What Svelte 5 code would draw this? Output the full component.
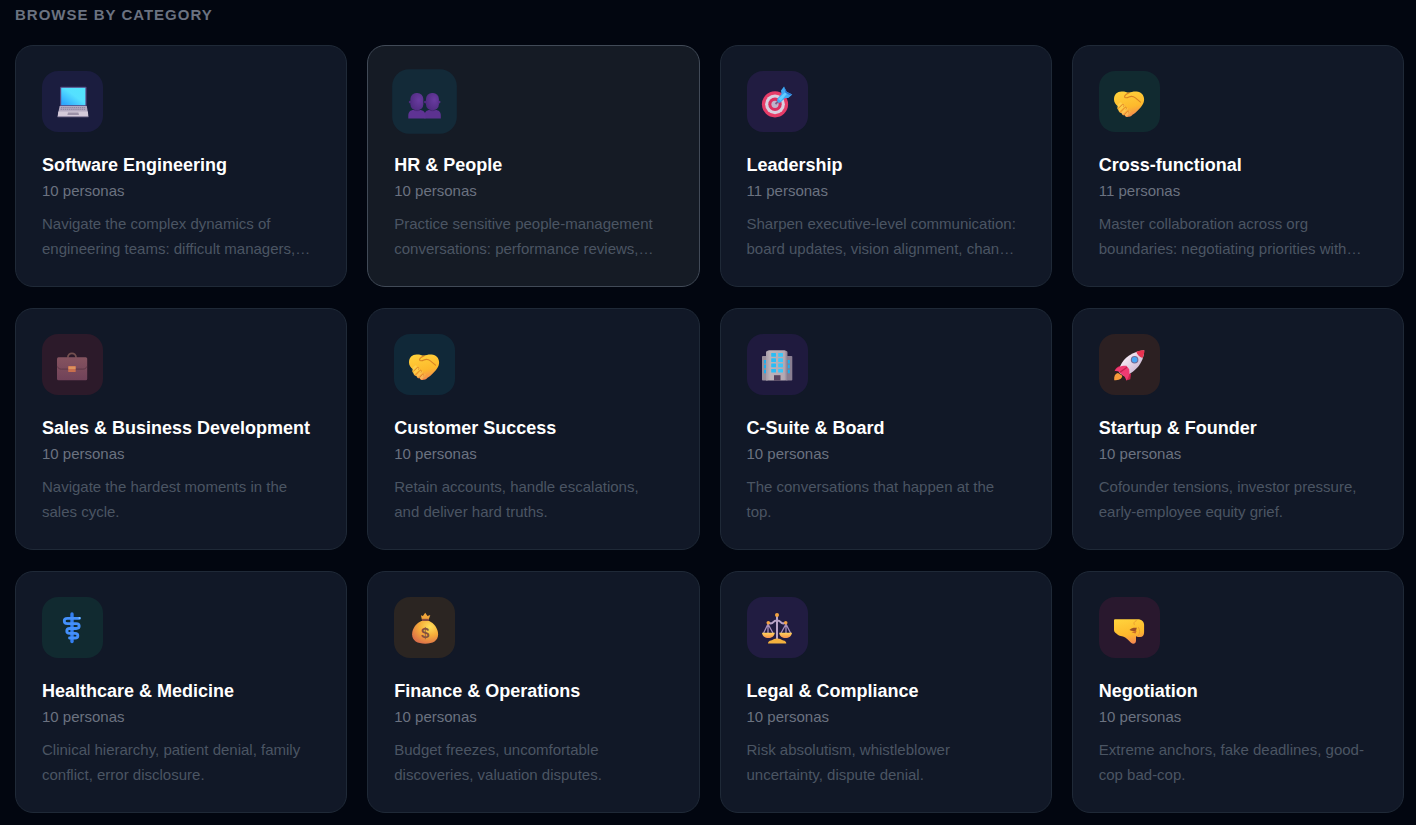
<script lang="ts">
    type Category = {
        icon: string
        tone: string
        title: string
        count: number
        text: string
    }

    const categories: Category[] = [
        { icon: 'laptop', tone: 'indigo', title: 'Software Engineering', count: 10, text: 'Navigate the complex dynamics of engineering teams: difficult managers,…' },
        { icon: 'people', tone: 'cyan', title: 'HR & People', count: 10, text: 'Practice sensitive people-management conversations: performance reviews,…' },
        { icon: 'target', tone: 'violet', title: 'Leadership', count: 11, text: 'Sharpen executive-level communication: board updates, vision alignment, chan…' },
        { icon: 'handshake', tone: 'green', title: 'Cross-functional', count: 11, text: 'Master collaboration across org boundaries: negotiating priorities with…' },
        { icon: 'briefcase', tone: 'red', title: 'Sales & Business Development', count: 10, text: 'Navigate the hardest moments in the sales cycle.' },
        { icon: 'handshake', tone: 'sky', title: 'Customer Success', count: 10, text: 'Retain accounts, handle escalations, and deliver hard truths.' },
        { icon: 'building', tone: 'purple', title: 'C-Suite & Board', count: 10, text: 'The conversations that happen at the top.' },
        { icon: 'rocket', tone: 'orange', title: 'Startup & Founder', count: 10, text: 'Cofounder tensions, investor pressure, early-employee equity grief.' },
        { icon: 'medical', tone: 'green', title: 'Healthcare & Medicine', count: 10, text: 'Clinical hierarchy, patient denial, family conflict, error disclosure.' },
        { icon: 'money', tone: 'amber', title: 'Finance & Operations', count: 10, text: 'Budget freezes, uncomfortable discoveries, valuation disputes.' },
        { icon: 'scales', tone: 'violet', title: 'Legal & Compliance', count: 10, text: 'Risk absolutism, whistleblower uncertainty, dispute denial.' },
        { icon: 'fist', tone: 'rose', title: 'Negotiation', count: 10, text: 'Extreme anchors, fake deadlines, good-cop bad-cop.' },
    ]

    let active = $state(1)
</script>

<svg class="defs" aria-hidden="true">
    <defs>
        <linearGradient id="screen" x1="0" y1="1" x2="1" y2="0">
            <stop offset="0.1" stop-color="#2fa8ff" />
            <stop offset="0.55" stop-color="#55e0ff" />
            <stop offset="1" stop-color="#52e4fb" />
        </linearGradient>
        <linearGradient id="skin" x1="0.2" y1="0" x2="0.5" y2="1">
            <stop offset="0" stop-color="#ffd23c" />
            <stop offset="0.65" stop-color="#fdb92c" />
            <stop offset="1" stop-color="#f58b50" />
        </linearGradient>
        <radialGradient id="head" cx="0.65" cy="0.4" r="0.8">
            <stop offset="0" stop-color="#693ba0" />
            <stop offset="1" stop-color="#4b297c" />
        </radialGradient>
        <linearGradient id="case" x1="0" y1="0" x2="0" y2="1">
            <stop offset="0" stop-color="#85535f" />
            <stop offset="1" stop-color="#704259" />
        </linearGradient>
        <linearGradient id="wall" x1="0" y1="0" x2="1" y2="0">
            <stop offset="0" stop-color="#a69da9" />
            <stop offset="0.2" stop-color="#bdb4ba" />
            <stop offset="0.85" stop-color="#b3a9b4" />
            <stop offset="1" stop-color="#887d91" />
        </linearGradient>
        <radialGradient id="bag" cx="0.68" cy="0.25" r="0.8">
            <stop offset="0" stop-color="#ffe05a" />
            <stop offset="0.5" stop-color="#f6ad3a" />
            <stop offset="1" stop-color="#dc7049" />
        </radialGradient>
        <linearGradient id="pan" x1="0" y1="0" x2="0" y2="1">
            <stop offset="0" stop-color="#ffd45a" />
            <stop offset="1" stop-color="#f5904f" />
        </linearGradient>
        <linearGradient id="hull" x1="0" y1="0" x2="1" y2="1">
            <stop offset="0.3" stop-color="#f2e6f2" />
            <stop offset="1" stop-color="#b9a3c4" />
        </linearGradient>
    </defs>
</svg>

{#snippet glyph(name: string)}
    <svg class="glyph" viewBox="0 0 31 31" aria-hidden="true">
        {#if name === 'laptop'}
            <rect x="3" y="0.7" width="26.6" height="20" rx="1" fill="#574580" />
            <rect x="4.2" y="1.8" width="24.2" height="17.4" fill="url(#screen)" />
            <path d="M2.6 20h27.2l1.4 8.4H1z" fill="#b5abc1" />
            <path d="M4 21.6h24.2M3.6 23.3h25.2" stroke="#8d84a0" stroke-width="1" stroke-dasharray="1.4 0.7" />
            <path d="M1.4 25.4h29.4l0.6 5.2H0.6z" fill="#d4cad9" />
            <path d="M11 26.4h10.4l0.6 2.6H10.4z" fill="#9c91a8" />
            <path d="M0.6 30.2h30.8v1H0.6z" fill="#9b91ad" />
        {:else if name === 'people'}
            <path d="M15.500 31.600v-3c0-3 2-5 5-5h5.500c3 0 4.900 2 4.900 5v3z" fill="#5c3290" />
            <rect x="16.900" y="7.500" width="12.200" height="16.200" rx="5.600" fill="url(#head)" />
            <circle cx="29.300" cy="16" r="1.300" fill="#582f8b" />
            <circle cx="16.300" cy="16" r="1.300" fill="#4f2b80" />
            <path d="M0.200 31.600v-3c0-3 2-5 4.800-5h6c3.200 0 5.400 2 5.400 5v3z" fill="#5f3394" />
            <rect x="2.200" y="7.500" width="12.200" height="16.200" rx="5.600" fill="url(#head)" />
            <circle cx="2" cy="16" r="1.300" fill="#4f2b80" />
            <path d="M5.500 23.500c1.700 0.900 4.200 0.900 5.800 0M20.200 23.500c1.700 0.900 4.200 0.900 5.800 0" stroke="#43266f" stroke-width="0.800" fill="none" />
        {:else if name === 'target'}
            <circle cx="13" cy="18.3" r="13.1" fill="#e63c68" />
            <circle cx="13" cy="18.3" r="9.9" fill="#d9cfdf" />
            <circle cx="13" cy="18.3" r="6.7" fill="#dc2f60" />
            <circle cx="13" cy="18.3" r="3.6" fill="#c1b3cb" />
            <path d="M13.500 18l5-5" stroke="#77628c" stroke-width="1.800" />
            <path d="M15.500 12.500l4-4.500 -0.500-3.500 3-4 2.700 5.300 5.600 2.700-4 3.400h-3.300l-4.500 4.600c-2.300 1.200-4.200-1.700-3-4z" fill="#3fa9f2" />
            <path d="M16 13l7-6.500 1.800 1.500-6 7z" fill="#62cdff" />
            <path d="M22 0.500l2.500 5.500 5.800 2.500-2.800 0.600-4-2.300z" fill="#2c72cc" />
        {:else if name === 'handshake'}
            <path d="M0 13.500C0 8 3.500 5.200 8 5.400c3 0 5 0.700 7 1.400 2-0.800 4.500-1.500 7.500-1.300 4.700 0.200 7.600 3.500 7.600 8 0 4.200-2.800 7.300-5.400 10-1.900 2-4 4.200-6.200 5.300-1 1.400-2.600 2.300-4.300 1.900-1.300 0.800-3.200-0.200-3.400-1.500-1.700 0.400-3-0.700-3.200-2.300-1.800 0.200-3.100-1.200-3-2.900-1.700-0.600-1.700-2.200-0.500-3.700C1.600 18.500 0 16.500 0 13.500z" fill="url(#skin)" />
            <path d="M15.200 6.700c-2 0.900-4.600 2.300-4.600 4 0 1.500 2.400 1.300 4.300 0.300 2.300-1.100 4.600-0.600 6.500 0.900l5.100 4.300" fill="none" stroke="#d98222" stroke-width="1.100" stroke-linecap="round" />
            <path d="M3.900 20.300l2.800-2.800M5.300 24l4.500-4.400M8.600 26.900l3.900-4M12.200 29.200l3-3.200" stroke="#fff07d" stroke-width="2.400" stroke-linecap="round" opacity="0.350" />
            <path d="M4.600 22.100l3.700-3.500c1.400-0.800 2.300 0.700 1.300 1.800M7.100 25.400l3.800-4c1.300-0.800 2.200 0.600 1.300 1.800M10.600 28.400l3-3.200c1.300-0.500 1.900 0.700 1 1.900" fill="none" stroke="#df842e" stroke-width="0.900" stroke-linecap="round" />
        {:else if name === 'briefcase'}
            <path d="M10.800 8.800c0-6 8.300-6 8.300 0" fill="none" stroke="#74504f" stroke-width="1.700" />
            <rect x="0" y="8.300" width="30.200" height="23" rx="1.500" fill="url(#case)" />
            <path d="M0.400 17.500c0.800 2 2 2.600 4 2.600h21.400c2 0 3.200-0.600 4-2.600" fill="none" stroke="#583343" stroke-width="0.800" />
            <rect x="11.200" y="17" width="7.500" height="6" rx="0.600" fill="#c96f4d" />
            <path d="M11.500 17.500h7v2.500h-7z" fill="#dc925f" />
        {:else if name === 'building'}
            <rect x="0" y="7" width="6" height="24.500" rx="0.800" fill="#988e9b" />
            <rect x="24" y="7" width="6.300" height="24.500" rx="0.800" fill="#897e91" />
            <path d="M4 3.300q0-1 1-1.300l2-0.800h15.500l2 0.800q1 0.300 1 1.300v28.300H4z" fill="url(#wall)" />
            {#each [4, 9.300, 14.600, 19.900] as y}
                <rect x="9.200" {y} width="4.800" height="3.700" rx="0.500" fill="#2abdf6" />
                <rect x="16.200" {y} width="4.800" height="3.700" rx="0.500" fill="#3bc7fa" />
            {/each}
            {#each [11, 15.800, 20.700] as y}
                <path d="M2 {y}h2v3.500H2zM25.800 {y}h2v3.500h-2z" fill="#1eaeee" />
            {/each}
            <rect x="12" y="26.200" width="6.500" height="5.400" fill="#57445f" />
        {:else if name === 'rocket'}
            <path d="M0.200 31.200C-0.200 27 1.200 24.600 4 24l4.300 2.700c-0.500 3.500-3.400 4.500-8.100 4.500z" fill="#f79a3b" />
            <path d="M7.200 16.800C4 17 2 18.800 0.600 22l6.500-0.500zM17 24.500l-0.700 5.800-4 1.100-1.300-6.500z" fill="#cb234f" />
            <path d="M5.500 24c-1.500-9.300 8.200-21 24.700-22.700 0 12.500-10 23.500-20.500 25.500z" fill="url(#hull)" />
            <path d="M30.300 1.300c-3-0.200-5.500 0.500-8 1.500 0.700 2.800 3 5.300 6.200 6.100 1.300-2.500 2-5 1.800-7.600z" fill="#e93350" />
            <circle cx="20.600" cy="10.800" r="3.800" fill="#716b97" />
            <circle cx="20.600" cy="10.800" r="2.700" fill="#47a6f5" />
            <path d="M0.600 22.200c2.500-4.400 6.500-5.600 11.800-5.400l2.800 3.400c0.700 4 0 8-2.900 11.200-0.700-2.400-1.700-3.900-3.300-4.800L5.500 23.200c-1.500-1-3.100-1.400-4.900-1z" fill="#ef3a72" />
            <path d="M6 23.300l7-5" stroke="#c51d50" stroke-width="1.300" />
        {:else if name === 'medical'}
            <path d="M15 2v27.500" stroke="#347ff0" stroke-width="3.400" stroke-linecap="round" />
            <path d="M22.500 6.300H10.400c-4.200 0-4.200 5.300 0 5.300h8.800c4 0 4 4.900 0 4.900h-6.500c-3.900 0-3.900 4.800 0 4.800h5.300c3.800 0 3.800 4.700 0 4.700h-5.500" fill="none" stroke="#4490fb" stroke-width="2.800" stroke-linecap="round" />
            <circle cx="22.500" cy="6" r="1" fill="#7fc3ff" />
        {:else if name === 'money'}
            <path d="M13 8L11.900 3.200l2 0.800 2.300-3.200 2.300 3.200 2.800-1L19.500 8z" fill="#f2a63a" />
            <path d="M13 6.800h6.800v2.800H13z" fill="#894b3c" />
            <path d="M12.300 8.900h7.900c4.500 2 8.900 7.200 8.900 13.400 0 6.500-5.100 9.400-12.900 9.400S3.100 28.800 3.100 22.300c0-6.200 4.600-11.400 9.200-13.400z" fill="url(#bag)" />
            <text x="16.100" y="26.300" text-anchor="middle" class="dollar">$</text>
        {:else if name === 'scales'}
            <path d="M6 12L1.400 21.500M6 12v9M6 12l5.200 9.500M24 12l-5.200 9.500M24 12v9M24 12l4.800 9.500" stroke="#a78fba" stroke-width="1.300" />
            <path d="M15 4v23M6.300 10.800c2.400 1 3.700 1 5-0.700 1-1.200 2-1.500 3.700-1.500s2.700 0.300 3.700 1.500c1.300 1.700 2.600 1.700 5 0.700" fill="none" stroke="#b8a3c7" stroke-width="2" />
            <circle cx="15" cy="2.900" r="2" fill="#f2a33e" />
            <circle cx="6.300" cy="10.700" r="1.800" fill="#f4a343" />
            <circle cx="23.700" cy="10.700" r="1.800" fill="#f4a343" />
            <path d="M0 20.700h12.800c-0.500 3.600-3 5.300-6.400 5.300S0.400 24.300 0 20.700zM17.200 20.700H30c-0.500 3.600-3 5.300-6.400 5.300s-6-1.700-6.400-5.300z" fill="url(#pan)" />
            <path d="M6 31.500c0-1.900 1.300-2.700 3-3 2-0.500 3-1.900 6.200-1.900s4.200 1.400 6.200 1.900c1.700 0.300 2.900 1.100 2.900 3z" fill="#f4b13e" />
        {:else if name === 'fist'}
            <path d="M0 8.200q0-0.900 1-0.900h22.500c4.500 0 6.600 2.500 6.600 5.500v7.500c0 3.300-1.500 5-4.300 4.800-1.300 0-2.600-0.300-3.800-0.900v4.300c0 3.300-3 4-5 2.200-2.800-2.600-4.800-5.300-8-6.200-3.300-0.600-5-1-7-3.200-1.400-1-2-2-2-3.500z" fill="url(#skin)" />
            <path d="M15.500 18c1.500-2 4-2.500 7.300-2.300l-0.800 3c-2.200 0.500-4.500 0.600-6.500-0.700z" fill="#9a4f25" />
            <path d="M17.500 20.300l4 1.200 1.200-2.800c-1.700 0.300-3.600 0.700-5.200 1.600z" fill="#c8692b" />
            <path d="M22.300 8.700c-2.300 0.800-3 2.700-1.800 4.100M24.500 15.500c1.700 2.600 1.500 5.700-0.200 8.200" fill="none" stroke="#eca032" stroke-linecap="round" />
        {/if}
    </svg>
{/snippet}

<main>
    <h2>Browse by category</h2>
    <div class="grid">
        {#each categories as category, i}
            <a href="#{category.icon}" class="card" class:active={active === i} onpointerenter={() => (active = i)}>
                <span class="icon {category.tone}">{@render glyph(category.icon)}</span>
                <h3>{category.title}</h3>
                <p class="count">{category.count} personas</p>
                <p class="text">{category.text}</p>
            </a>
        {/each}
    </div>
</main>

<style>
    :global(body) {
        background: #020610;
        font-family: "Liberation Sans", Arial, sans-serif;
    }

    .defs {
        position: absolute;
        width: 0;
        height: 0;
    }

    main {
        padding: 5px 12px 12px 15px;
    }

    h2, h3, p {
        margin: 0;
    }

    h2 {
        color: #6b7280;
        font-size: 15px;
        line-height: 20px;
        letter-spacing: 1px;
        text-transform: uppercase;
        margin-bottom: 20px;
    }

    .grid {
        display: grid;
        grid-template-columns: repeat(4, minmax(0, 1fr));
        gap: 21px 20px;
    }

    .card {
        display: flex;
        flex-direction: column;
        padding: 25px 32px 25px 26px;
        border: 1px solid #1f2937;
        border-radius: 18px;
        background: #111827;
        text-decoration: none;
    }

    .card.active {
        background: #151b25;
        border-color: #414a57;
    }

    .icon {
        display: flex;
        align-items: center;
        justify-content: center;
        width: 61px;
        height: 61px;
        margin-bottom: 20px;
        border-radius: 16px;
    }

    .active .icon {
        transform: scale(1.06);
    }

    .glyph {
        width: 31px;
        height: 31px;
        overflow: visible;
    }

    .dollar {
        font-size: 15px;
        font-weight: bold;
        fill: #85513f;
    }

    .indigo { background: #1b1d3f; }
    .cyan { background: #132a38; }
    .violet { background: #211c41; }
    .green { background: #112a30; }
    .red { background: #2c1a2a; }
    .sky { background: #102838; }
    .purple { background: #1f1a3e; }
    .orange { background: #2c2022; }
    .amber { background: #2b2522; }
    .rose { background: #29182e; }

    h3 {
        color: #fff;
        font-size: 18px;
        line-height: 26px;
    }

    .count {
        color: #6b7280;
        font-size: 15px;
        line-height: 26px;
        margin-bottom: 7px;
    }

    .text {
        color: #4b5563;
        font-size: 15px;
        line-height: 25px;
    }
</style>
